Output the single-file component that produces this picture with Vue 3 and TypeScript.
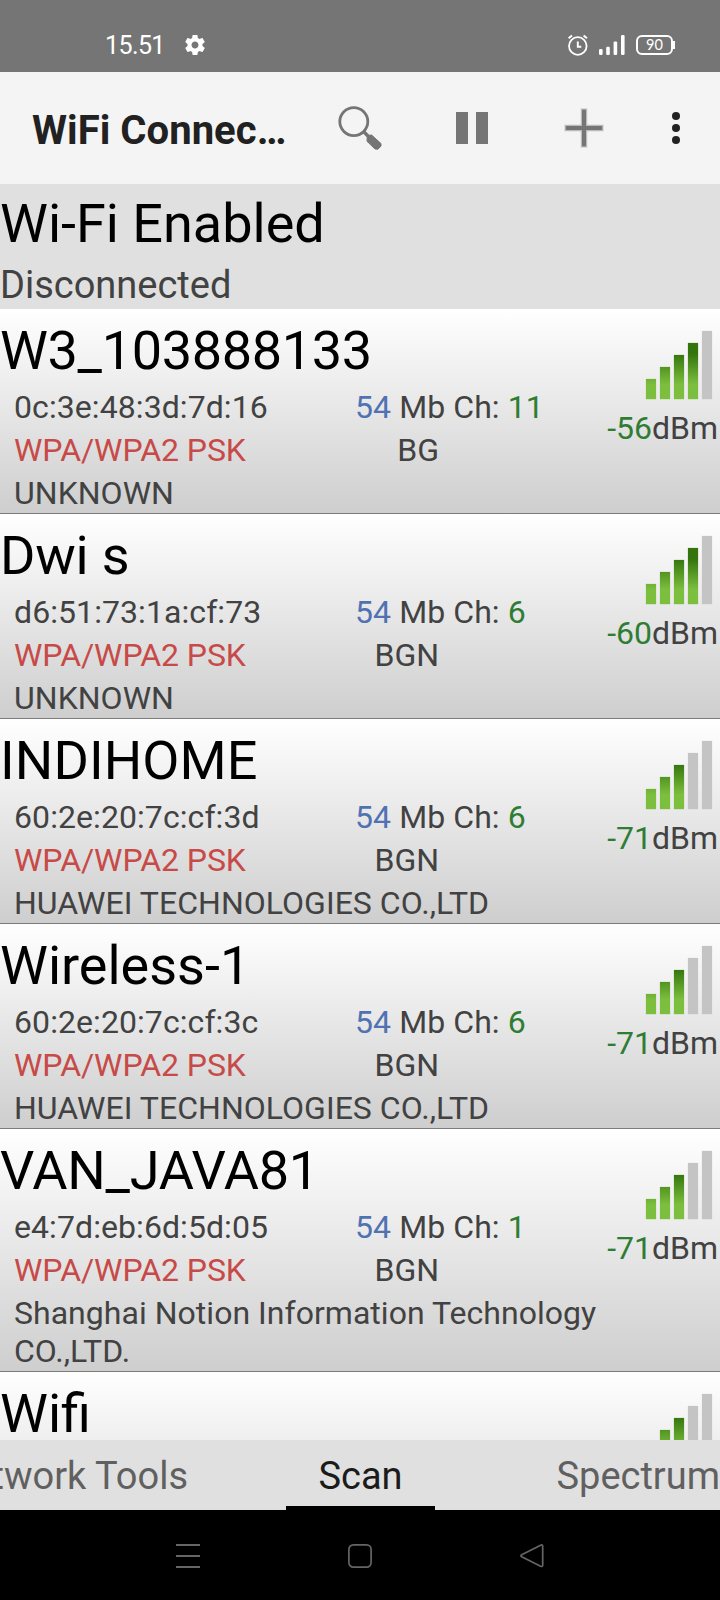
<script setup lang="ts">
interface Network {
  name: string
  tracking: number
  bars: number
  mac?: string
  security?: string
  vendor?: string
  channel?: number
  mode?: string
  level?: number
}

const networks: Network[] = [
  { name: 'W3_103888133', tracking: -0.33, mac: '0c:3e:48:3d:7d:16', security: 'WPA/WPA2 PSK', vendor: 'UNKNOWN', channel: 11, mode: 'BG', level: -56, bars: 4 },
  { name: 'Dwi s', tracking: -0.2, mac: 'd6:51:73:1a:cf:73', security: 'WPA/WPA2 PSK', vendor: 'UNKNOWN', channel: 6, mode: 'BGN', level: -60, bars: 4 },
  { name: 'INDIHOME', tracking: 0.1, mac: '60:2e:20:7c:cf:3d', security: 'WPA/WPA2 PSK', vendor: 'HUAWEI TECHNOLOGIES CO.,LTD', channel: 6, mode: 'BGN', level: -71, bars: 3 },
  { name: 'Wireless-1', tracking: 0, mac: '60:2e:20:7c:cf:3c', security: 'WPA/WPA2 PSK', vendor: 'HUAWEI TECHNOLOGIES CO.,LTD', channel: 6, mode: 'BGN', level: -71, bars: 3 },
  { name: 'VAN_JAVA81', tracking: -0.2, mac: 'e4:7d:eb:6d:5d:05', security: 'WPA/WPA2 PSK', vendor: 'Shanghai Notion Information Technology CO.,LTD.', channel: 1, mode: 'BGN', level: -71, bars: 3 },
  { name: 'Wifi', tracking: 0, bars: 3 },
]

const barTops = [48.9, 36.9, 24.9, 12.9, 0.9]
</script>

<template>
  <div class="screen">
    <div class="status">
      <span class="clock">15.51</span>
      <svg class="gear" width="24" height="24" viewBox="0 0 24 24">
        <path fill="#fff" d="M19.43 12.98c.04-.32.07-.64.07-.98s-.03-.66-.07-.98l2.11-1.65c.19-.15.24-.42.12-.64l-2-3.46c-.12-.22-.39-.3-.61-.22l-2.49 1c-.52-.4-1.08-.73-1.69-.98l-.38-2.65C14.46 2.18 14.25 2 14 2h-4c-.25 0-.46.18-.49.42l-.38 2.65c-.61.25-1.17.59-1.69.98l-2.49-1c-.23-.09-.49 0-.61.22l-2 3.46c-.13.22-.07.49.12.64l2.11 1.65c-.04.32-.07.65-.07.98s.03.66.07.98l-2.11 1.65c-.19.15-.24.42-.12.64l2 3.46c.12.22.39.3.61.22l2.49-1c.52.4 1.08.73 1.69.98l.38 2.65c.03.24.24.42.49.42h4c.25 0 .46-.18.49-.42l.38-2.65c.61-.25 1.17-.59 1.69-.98l2.49 1c.23.09.49 0 .61-.22l2-3.46c.12-.22.07-.49-.12-.64l-2.11-1.65zM12 15.5c-1.93 0-3.5-1.57-3.5-3.5s1.57-3.5 3.5-3.5 3.5 1.57 3.5 3.5-1.57 3.5-3.5 3.5z" />
      </svg>
      <svg class="alarm" width="22" height="22" viewBox="0 0 22 22" fill="none" stroke="#fff">
        <circle cx="10.8" cy="12" r="8.8" stroke-width="1.8" />
        <path d="M10.8 7.5v5.2h3.5" stroke-width="1.9" />
        <path d="M1.6 4.2 5 1.5M20 4.2l-3.4-2.7" stroke-width="2" />
      </svg>
      <svg class="cell" width="28" height="22" viewBox="0 0 28 22" fill="#fff">
        <rect x="1" y="15" width="3.6" height="6" rx="1.2" />
        <rect x="8.2" y="12.8" width="3.6" height="8.2" rx="1.2" />
        <rect x="15.6" y="7.4" width="3.6" height="13.6" rx="1.2" />
        <rect x="23" y="1" width="3.6" height="20" rx="1.2" />
      </svg>
      <div class="battery"><div class="cellbody">90</div><i /></div>
    </div>

    <header class="appbar">
      <h1>WiFi Connec…</h1>
      <svg class="search" width="46" height="46" viewBox="0 0 46 46">
        <circle cx="16.8" cy="16.6" r="14" fill="none" stroke="#757575" stroke-width="2.8" />
        <path d="m26.5 26.5 5 5" stroke="#757575" stroke-width="3.4" />
        <path d="M30.3 30.6 34.6 30 44 38.6V41L41 44.2 38 44 30 36.3z" fill="#757575" stroke="#757575" stroke-width="1" stroke-linejoin="round" />
      </svg>
      <svg class="pause" width="32" height="32" viewBox="0 0 32 32" fill="#757575">
        <path d="M0 0h12v32H0zM20 0h12v32H20z" />
      </svg>
      <svg class="plus" width="40" height="40" viewBox="0 0 40 40" fill="#757575">
        <path d="M16.8.6h6.4v16.2h16.2v6.4H23.2v16.2h-6.4V23.2H.6v-6.4h16.2z" opacity=".45" />
        <path d="M18 1.8h4v16.3h16.2v4H22v16.2h-4V22.1H1.8v-4H18z" />
      </svg>
      <svg class="more" width="8" height="32" viewBox="0 0 8 32" fill="#212121">
        <circle cx="4" cy="4" r="4" /><circle cx="4" cy="16" r="4" /><circle cx="4" cy="28" r="4" />
      </svg>
    </header>

    <section class="state">
      <div class="title">Wi-Fi Enabled</div>
      <div class="sub">Disconnected</div>
    </section>

    <main class="list">
      <article v-for="n in networks" :key="n.name" class="row">
        <div class="info">
          <div class="title" :style="n.tracking ? { letterSpacing: n.tracking + 'px' } : undefined">{{ n.name }}</div>
          <div v-if="n.mac" class="details">
            <span class="mac">{{ n.mac }}</span>
            <span class="rate"><b class="blue">54</b> Mb Ch: <b class="green">{{ n.channel }}</b></span>
            <span class="red">{{ n.security }}</span>
            <span class="mode">{{ n.mode }}</span>
            <span class="vendor">{{ n.vendor }}</span>
          </div>
        </div>
        <div class="signal">
          <svg width="68" height="70" viewBox="0 0 68 70">
            <defs>
              <linearGradient id="bar" gradientUnits="userSpaceOnUse" x1="0" y1="12" x2="0" y2="69">
                <stop offset="0.2" stop-color="#33740c" />
                <stop offset="0.75" stop-color="#7cbf3e" />
              </linearGradient>
            </defs>
            <rect
              v-for="(top, i) in barTops"
              :key="i"
              :x="0.9 + i * 14"
              :y="top"
              width="10.2"
              :height="69.2 - top"
              :fill="i < n.bars ? 'url(#bar)' : '#c4c4c4'"
            />
          </svg>
          <div v-if="n.level" class="dbm"><b class="green">{{ n.level }}</b>dBm</div>
        </div>
      </article>
    </main>

    <nav class="tabs">
      <span class="tab left">Network Tools</span>
      <span class="tab active">Scan</span>
      <span class="tab right">Spectrum</span>
    </nav>

    <footer class="navbar">
      <svg width="24" height="24" viewBox="0 0 24 24" fill="#656565">
        <path d="M0 0h24v2H0zM0 11h24v2H0zM0 22h24v2H0z" />
      </svg>
      <svg width="24" height="24" viewBox="0 0 24 24" fill="none" stroke="#656565" stroke-width="1.7">
        <rect x=".9" y=".9" width="22.2" height="22.2" rx="4.5" />
      </svg>
      <svg width="24" height="24" viewBox="0 0 24 24" fill="none" stroke="#656565" stroke-width="1.7" stroke-linejoin="round">
        <path d="M1.7 10.8 20.6 1.2Q22.7.3 22.7 2.5v18.4q0 2.2-2.1 1.3L1.7 12.7q-1.5-1 0-1.9z" />
      </svg>
    </footer>
  </div>
</template>

<style>
body {
  margin: 0;
  background: #000;
}
</style>

<style scoped>
.screen {
  width: 720px;
  height: 1600px;
  display: flex;
  flex-direction: column;
  overflow: hidden;
  background: #000;
  font-family: Roboto, sans-serif;
  color: #424242;
}
b {
  font-weight: 400;
}
.screen > * {
  flex: none;
}
svg {
  display: block;
  flex: none;
}
.status {
  box-sizing: border-box;
  height: 72px;
  padding: 18px 45px 0 105px;
  display: flex;
  align-items: center;
  background: #757575;
  color: #fff;
}
.clock {
  width: 78px;
  padding-top: 1px;
  font-size: 25px;
  line-height: 30px;
  letter-spacing: -0.6px;
  white-space: nowrap;
}
.alarm {
  margin-left: auto;
}
.cell {
  margin-left: 9px;
}
.battery {
  margin-left: 10px;
  display: flex;
  align-items: center;
}
.cellbody {
  box-sizing: border-box;
  width: 37px;
  height: 20px;
  border: 2px solid #fff;
  border-radius: 6px;
  font-family: Lato, sans-serif;
  font-size: 14.5px;
  line-height: 16px;
  text-align: center;
}
.battery i {
  width: 2px;
  height: 8px;
  background: #fff;
}
.appbar {
  height: 112px;
  display: flex;
  align-items: center;
  background: #f4f4f4;
}
h1 {
  width: 305px;
  margin: 5px 0 0 32px;
  font-size: 40px;
  line-height: 48px;
  font-weight: 700;
  letter-spacing: 0.05px;
  color: #212121;
  white-space: nowrap;
}
.pause {
  margin-left: 73px;
}
.plus {
  margin-left: 76px;
}
.more {
  margin-left: 68px;
}
.state {
  height: 125px;
  background: #e0e0e0;
}
.title {
  font-size: 54px;
  line-height: 64px;
  color: #000;
  white-space: nowrap;
}
.state .title {
  padding-top: 8px;
}
.sub {
  margin-top: 7px;
  font-size: 38px;
  line-height: 44px;
}
.list {
  height: 1131px;
  overflow: hidden;
}
.row {
  box-sizing: border-box;
  min-height: 205px;
  padding-top: 10px;
  border-bottom: 1px solid #7c7c7c;
  display: flex;
  background: linear-gradient(#fff, #cecece);
}
.info {
  width: 608px;
}
.details {
  margin-top: 5px;
  padding-left: 14px;
  display: grid;
  grid-template-columns: 341px 253px;
  row-gap: 5px;
  font-size: 32px;
  line-height: 38px;
  white-space: nowrap;
}
.mac {
  letter-spacing: 0.08px;
}
.rate {
  letter-spacing: 0.08px;
}
.mode {
  width: 84px;
  text-align: right;
}
.vendor {
  grid-column: 1 / 3;
  margin-bottom: 1px;
  letter-spacing: 0.03px;
  white-space: normal;
}
.signal {
  width: 110px;
  padding: 11px 2px 0 0;
  display: flex;
  flex-direction: column;
  align-items: flex-end;
}
.signal svg {
  margin-right: 5px;
}
.dbm {
  margin-top: 9px;
  font-size: 32px;
  line-height: 38px;
  white-space: nowrap;
}
.red {
  letter-spacing: -0.1px;
  color: #c74a48;
}
.blue {
  color: #5172b2;
}
.green {
  color: #2e7d32;
}
.tabs {
  height: 70px;
  display: grid;
  grid-template-columns: 286px 149px 285px;
  background: #e0e0e0;
  font-size: 38px;
  line-height: 73px;
  color: #606060;
  white-space: nowrap;
  overflow: hidden;
}
.left {
  justify-self: end;
  margin-right: 98px;
}
.active {
  box-sizing: border-box;
  border-bottom: 4px solid #000;
  text-align: center;
  color: #1b1b1b;
  height: 70px;
}
.right {
  margin-left: 121.5px;
}
.navbar {
  height: 90px;
  padding: 2px 176px 0;
  box-sizing: border-box;
  display: flex;
  justify-content: space-between;
  align-items: center;
}
</style>
